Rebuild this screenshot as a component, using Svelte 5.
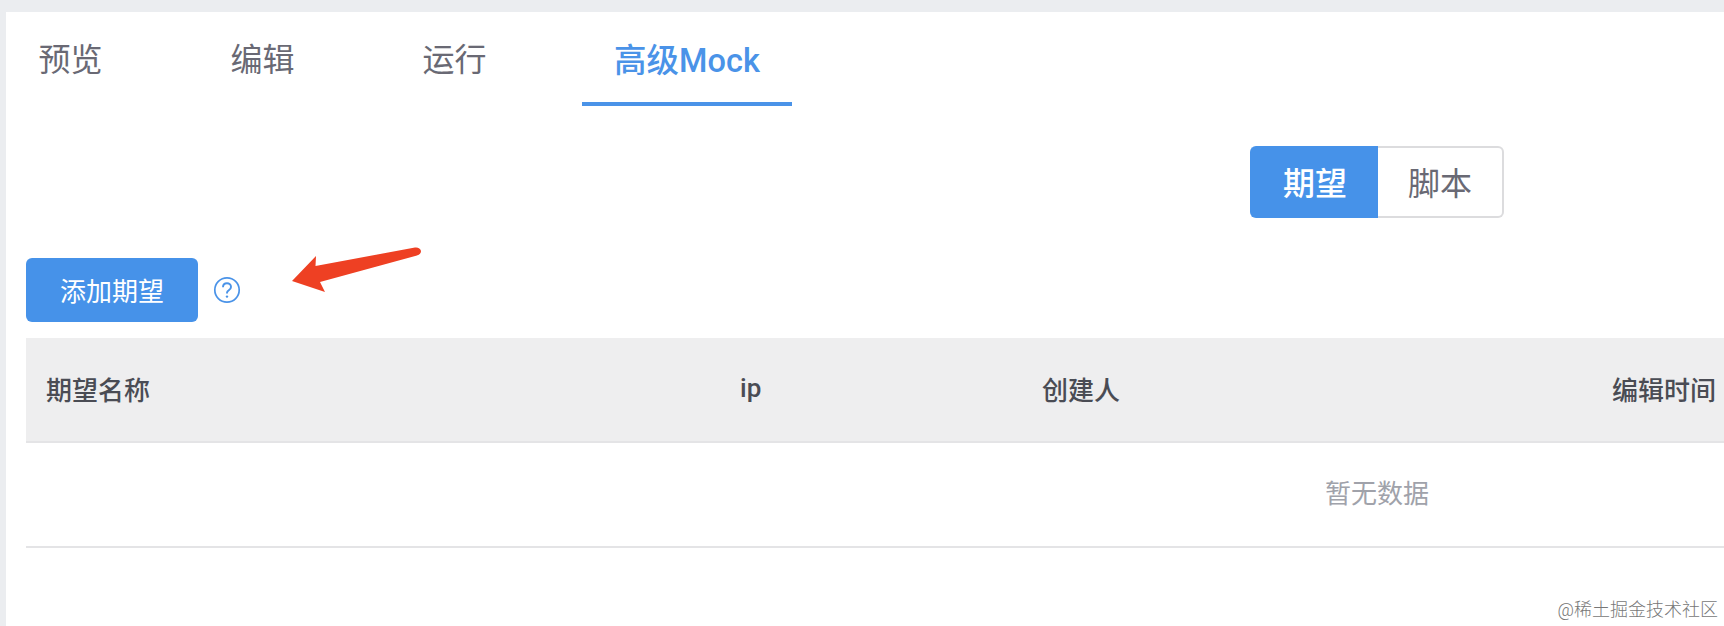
<script lang="ts">
  const tabs = ['预览', '编辑', '运行', '高级Mock'];
  let activeTab = $state('高级Mock');
  let mode = $state('期望');
</script>

<div class="page">
  <div class="card">
    <nav class="tabs">
      {#each tabs as tab}
        <button class="tab" class:active={activeTab === tab} type="button" onclick={() => (activeTab = tab)}>
          {tab}
        </button>
      {/each}
    </nav>

    <div class="mode-row">
      <div class="segment">
        <button class="seg first" class:on={mode === '期望'} type="button" onclick={() => (mode = '期望')}>期望</button>
        <button class="seg last" class:on={mode === '脚本'} type="button" onclick={() => (mode = '脚本')}>脚本</button>
      </div>
    </div>

    <div class="actions">
      <button class="add" type="button">添加期望</button>
      <svg class="help" width="28" height="28" viewBox="0 0 28 28" fill="none" aria-hidden="true">
        <circle cx="14" cy="14" r="12.2" stroke="#4a93e8" stroke-width="1.7" />
        <path d="M10 11.2c0-2.4 1.8-3.9 4-3.9s4 1.5 4 3.6c0 1.7-1 2.5-2.2 3.3-1.1.7-1.8 1.3-1.8 2.6v.6" stroke="#4a93e8" stroke-width="1.9" />
        <circle cx="14" cy="20.6" r="1.2" fill="#4a93e8" />
      </svg>
    </div>

    <div class="table">
      <div class="head">
        <span>期望名称</span>
        <span>ip</span>
        <span>创建人</span>
        <span>编辑时间</span>
      </div>
      <div class="empty">暂无数据</div>
    </div>
  </div>

  <svg class="arrow" width="140" height="56" viewBox="0 0 140 56" aria-hidden="true">
    <path d="M2 35 26 10 25.5 20 125 1.5Q130 1 131 5 131 8 127 9.5L30 36 35 46Z" fill="#ee4023" />
  </svg>
  <div class="watermark">@稀土掘金技术社区</div>
</div>

<style>
  :global(body) {
    margin: 0;
    overflow: hidden;
  }

  .page {
    position: relative;
    width: 1724px;
    height: 626px;
    box-sizing: border-box;
    padding: 12px 0 0 6px;
    overflow: hidden;
    background: #ebedf0;
    font-family: Roboto, "Noto Sans CJK SC", sans-serif;
  }

  .card {
    height: 100%;
    padding-left: 20px;
    background: #fff;
  }

  button {
    font: inherit;
    cursor: pointer;
  }

  .tabs {
    display: flex;
    gap: 65px;
    margin-left: -19px;
  }

  .tab {
    width: 127px;
    height: 94px;
    padding: 0;
    border: none;
    border-bottom: 4px solid transparent;
    background: none;
    color: #696974;
    font-size: 32px;
  }

  .tab.active {
    width: 210px;
    margin-left: -1px;
    border-bottom-color: #4a93e8;
    color: #4a93e8;
    font-size: 32.5px;
    font-weight: 500;
  }

  .mode-row {
    display: flex;
    justify-content: flex-end;
    margin-top: 40px;
    padding-right: 220px;
  }

  .segment {
    display: flex;
    height: 72px;
  }

  .seg {
    padding: 0 0 2px;
    border: 2px solid #dcdcde;
    background: #fff;
    color: #696974;
    font-size: 32px;
  }

  .seg.first {
    width: 128px;
    border-right: none;
    border-radius: 6px 0 0 6px;
  }

  .seg.last {
    width: 126px;
    border-left: none;
    border-radius: 0 6px 6px 0;
  }

  .seg.on {
    border-color: #4692e9;
    background: #4692e9;
    color: #fff;
    font-weight: 500;
  }

  .actions {
    display: flex;
    align-items: center;
    gap: 15px;
    margin-top: 40px;
  }

  .add {
    width: 172px;
    height: 64px;
    padding: 0 0 2px;
    border: none;
    border-radius: 6px;
    background: #4692e9;
    color: #fff;
    font-size: 26px;
  }

  .table {
    width: 2702px;
    margin-top: 16px;
  }

  .head {
    display: grid;
    grid-template-columns: 694px 302px 570px 1fr;
    align-items: center;
    height: 105px;
    box-sizing: border-box;
    padding: 0 0 3px 20px;
    border-bottom: 2px solid #e4e4e6;
    background: #eeeeef;
    color: #4a4c54;
    font-size: 26px;
    font-weight: 500;
  }

  .empty {
    display: flex;
    align-items: center;
    justify-content: center;
    height: 105px;
    padding-bottom: 7px;
    box-sizing: border-box;
    border-bottom: 2px solid #e4e4e6;
    color: #a0a2aa;
    font-size: 26px;
  }

  .arrow {
    position: absolute;
    left: 290px;
    top: 246px;
  }

  .watermark {
    position: absolute;
    right: 6px;
    top: 595px;
    color: #777;
    font-size: 18px;
    font-weight: 300;
  }
</style>
